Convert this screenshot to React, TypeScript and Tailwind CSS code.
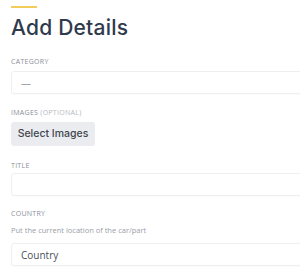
import React from "react";

const labelCls =
  "block h-[10px] text-[7px] leading-[10px] tracking-[0.04em] uppercase text-[#8a8f98] font-['Open_Sans',sans-serif]";

const boxCls =
  "w-[340px] h-[23px] bg-white border border-[#eeeff1] rounded-[3px] shadow-[0_1px_1px_rgba(0,0,0,0.02)] flex items-center px-[9px]";

const Field: React.FC<{ label: React.ReactNode; children: React.ReactNode; className?: string }> = ({
  label,
  children,
  className,
}) => (
  <div className={className}>
    <label className={labelCls}>{label}</label>
    {children}
  </div>
);

export default function App() {
  return (
    <div className="w-[300px] h-[272px] overflow-hidden bg-white font-['Open_Sans',sans-serif]">
      <div className="pl-[11px] pt-[6px]">
        <div className="w-[26px] h-[2px] bg-[#f2cd5c]" />
        <h1 className="mt-[7px] h-[26px] text-[21px] leading-[26px] font-medium text-[#2f3a4c] font-['Inter',sans-serif] tracking-[0.01em]">
          Add Details
        </h1>

        <Field label="Category" className="mt-[16px]">
          <div className={`${boxCls} mt-[4px]`}>
            <span className="text-[10px] leading-none text-[#a3a7ad]">—</span>
          </div>
        </Field>

        <Field
          label={
            <>
              Images <span className="text-[#b5b9bf]">(optional)</span>
            </>
          }
          className="mt-[14px]"
        >
          <button
            type="button"
            className="mt-[4px] w-[84px] h-[24px] rounded-[3px] bg-[#ebecf0] text-[10.5px] font-medium text-[#40454d] font-['Inter',sans-serif]"
          >
            Select Images
          </button>
        </Field>

        <Field label="Title" className="mt-[15px]">
          <div className={`${boxCls} mt-[2px]`} />
        </Field>

        <Field label="Country" className="mt-[13px]">
          <p className="mt-[5px] h-[12px] text-[7.5px] leading-[12px] text-[#9aa0a8]">
            Put the current location of the car/part
          </p>
          <div className={`${boxCls} mt-[7px]`}>
            <span className="text-[10px] leading-none text-[#4a4f57]">Country</span>
          </div>
        </Field>
      </div>
    </div>
  );
}
